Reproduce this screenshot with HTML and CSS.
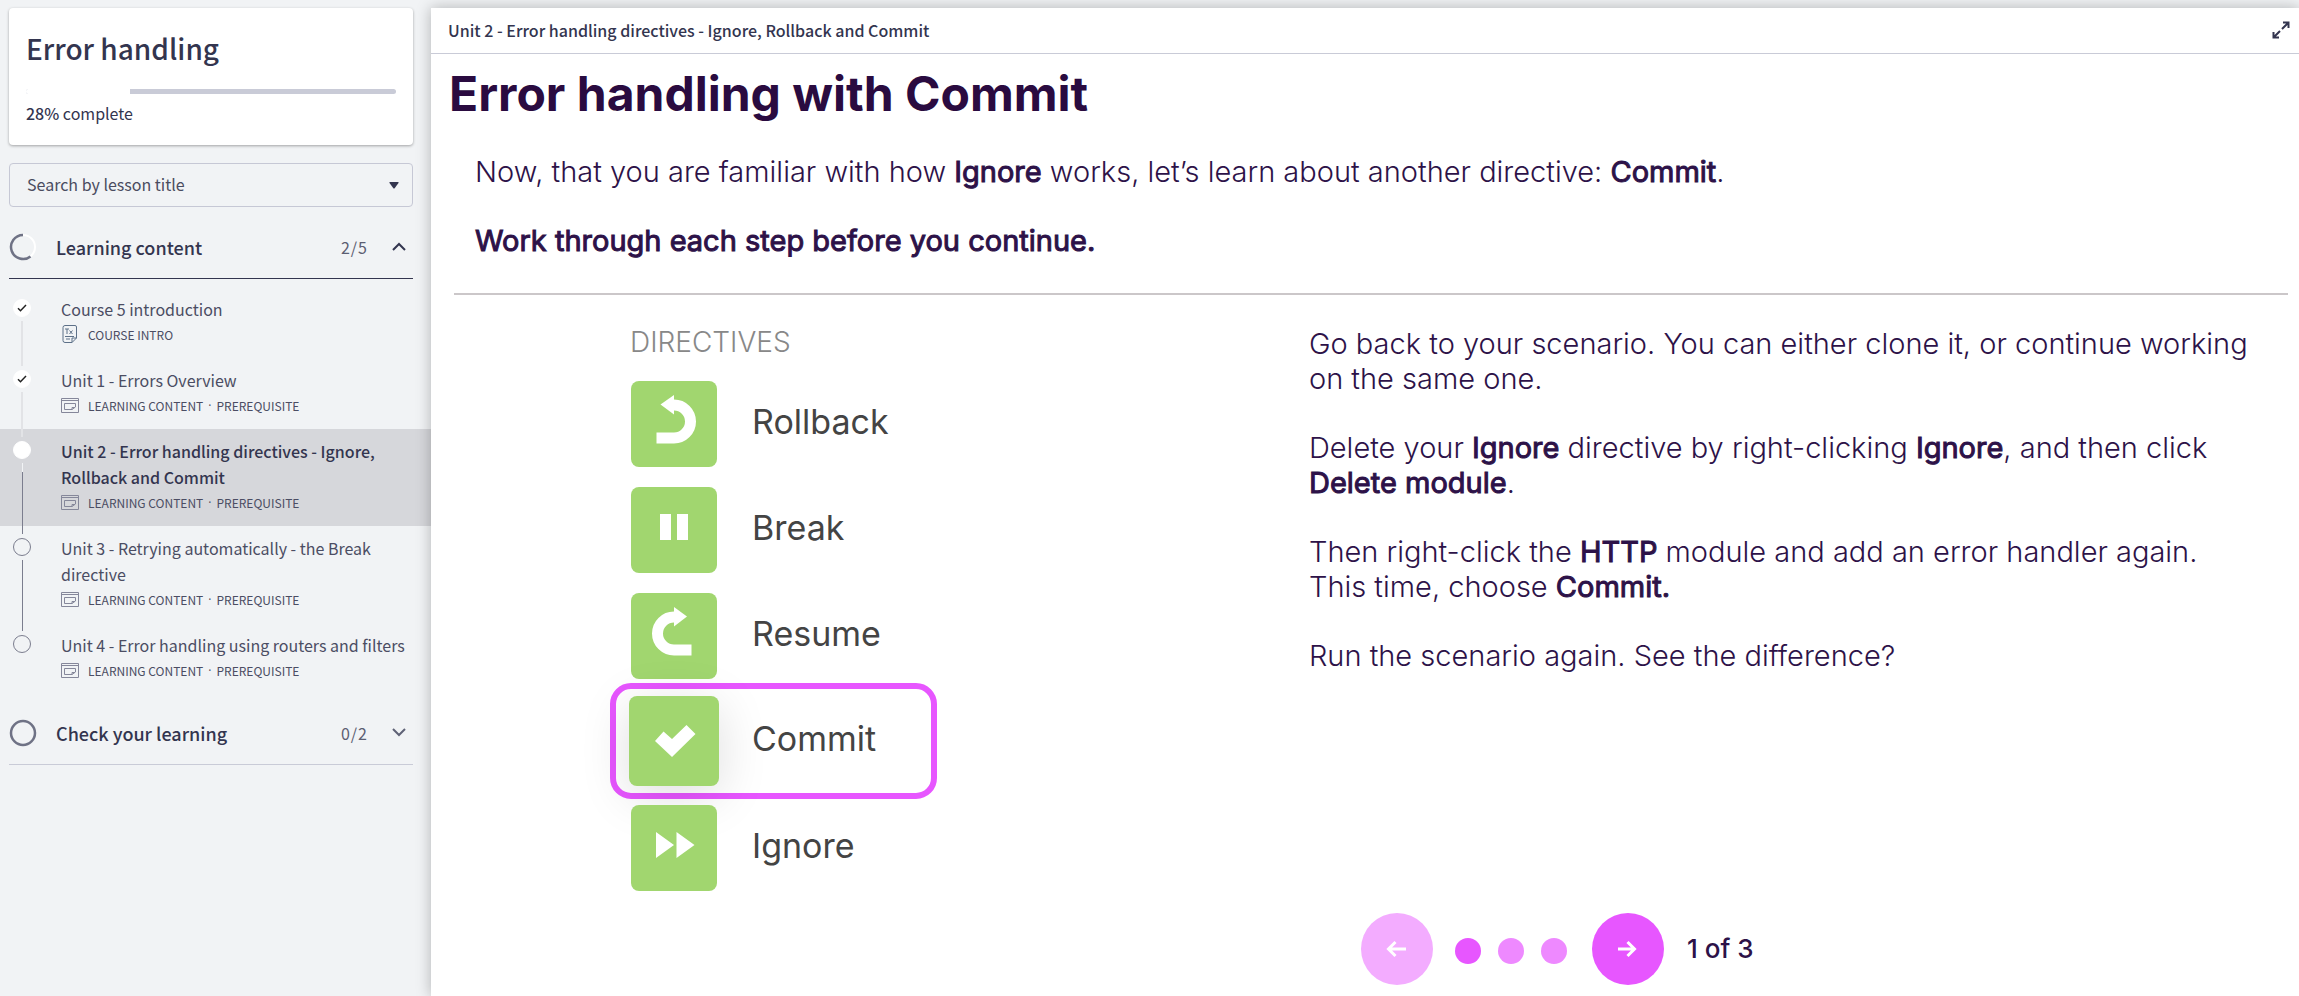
FILE: index.html
```html
<!DOCTYPE html>
<html lang="en">
<head>
<meta charset="utf-8">
<meta name="viewport" content="width=device-width, initial-scale=1">
<title>Error handling</title>
<link rel="stylesheet" href="styles.css">
</head>
<body>
<svg class="sprite" aria-hidden="true">
  <symbol id="lesson" viewBox="0 0 18 15">
    <path d="M.5.5h17v14H.5zM1 2.500h16" fill="none" stroke="currentColor"/>
    <path d="M11 11.500H3.500v-6h11v3.500l-3.500 2.500V9.500h3" fill="none" stroke="currentColor"/>
  </symbol>
</svg>
<div class="layout">
  <aside class="sidebar">
    <section class="course">
      <h1 class="course-title">Error handling</h1>
      <div class="progress" role="progressbar" aria-label="Course progress" aria-valuenow="28" aria-valuemin="0" aria-valuemax="100"><div class="progress-done" style="width:28%"></div></div>
      <p class="progress-text"><b>28%</b> complete</p>
    </section>
    <div class="search">
      <select class="search-select" aria-label="Search by lesson title"><option>Search by lesson title</option></select>
      <svg class="caret" width="10" height="7" viewBox="0 0 10 7"><path d="M1 0h8q1 0 .5 1L5.800 6q-.8 1-1.600 0L.5 1Q0 0 1 0z" fill="#33354f"/></svg>
    </div>
    <nav aria-label="Lessons">
      <button class="section section-open" type="button" aria-expanded="true">
        <svg class="ring" width="28" height="28" viewBox="0 0 28 28"><circle cx="14" cy="14" r="12" fill="none" stroke="#fff" stroke-width="2"/><path d="M14 2A12 12 0 1 0 21.500 23.400" fill="none" stroke="#6f7285" stroke-width="2.500"/></svg>
        <span class="section-name">Learning content</span>
        <span class="section-count">2/5</span>
        <svg class="chevron" width="14" height="9" viewBox="0 0 14 9"><path d="M1 8l6-6 6 6" fill="none" stroke="#33354f" stroke-width="2"/></svg>
      </button>
      <ol class="lessons">
        <li class="lesson">
          <div class="rail"><span class="dot dot-done"><svg width="10" height="8" viewBox="0 0 10 8"><path d="M1 4.200l2.500 2.500L9 1" fill="none" stroke="#222" stroke-width="1.500"/></svg></span><span class="line"></span></div>
          <a class="lesson-link" href="#intro"><span class="lesson-title">Course 5 introduction</span>
            <span class="meta"><svg class="meta-icon" width="18" height="18" viewBox="0 0 18 18"><path d="M4 .5h10q1.500 0 1.500 1.500v11l-4.500 4.500H4Q2 17.500 2 15.500V2.500Q2 .5 4 .5zM15.500 13H11v4.500M4 4h4M6 4v5M8.500 5.500l3 3.500M11.500 5.500l-3 3.500M4 11.500h9M5 14h4" fill="none" stroke="#5d7088"/></svg>COURSE INTRO</span></a>
        </li>
        <li class="lesson">
          <div class="rail"><span class="dot dot-done"><svg width="10" height="8" viewBox="0 0 10 8"><path d="M1 4.200l2.500 2.500L9 1" fill="none" stroke="#222" stroke-width="1.500"/></svg></span><span class="line"></span></div>
          <a class="lesson-link" href="#unit1"><span class="lesson-title">Unit 1 - Errors Overview</span>
            <span class="meta"><svg class="meta-icon" width="18" height="15"><use href="#lesson"/></svg>LEARNING CONTENT<span class="sep">·</span>PREREQUISITE</span></a>
        </li>
        <li class="lesson current">
          <div class="rail"><span class="dot dot-done"></span><span class="line line-current"></span></div>
          <a class="lesson-link" href="#unit2" aria-current="page"><span class="lesson-title">Unit 2 - Error handling directives - Ignore, Rollback and Commit</span>
            <span class="meta"><svg class="meta-icon" width="18" height="15"><use href="#lesson"/></svg>LEARNING CONTENT<span class="sep">·</span>PREREQUISITE</span></a>
        </li>
        <li class="lesson">
          <div class="rail"><span class="dot"></span><span class="line line-dark"></span></div>
          <a class="lesson-link" href="#unit3"><span class="lesson-title">Unit 3 - Retrying automatically - the Break directive</span>
            <span class="meta"><svg class="meta-icon" width="18" height="15"><use href="#lesson"/></svg>LEARNING CONTENT<span class="sep">·</span>PREREQUISITE</span></a>
        </li>
        <li class="lesson">
          <div class="rail"><span class="dot"></span></div>
          <a class="lesson-link" href="#unit4"><span class="lesson-title">Unit 4 - Error handling using routers and filters</span>
            <span class="meta"><svg class="meta-icon" width="18" height="15"><use href="#lesson"/></svg>LEARNING CONTENT<span class="sep">·</span>PREREQUISITE</span></a>
        </li>
      </ol>
      <button class="section" type="button" aria-expanded="false">
        <svg class="ring" width="28" height="28" viewBox="0 0 28 28"><circle cx="14" cy="14" r="12" fill="none" stroke="#6f7285" stroke-width="2.500"/></svg>
        <span class="section-name">Check your learning</span>
        <span class="section-count">0/2</span>
        <svg class="chevron" width="14" height="9" viewBox="0 0 14 9"><path d="M1 1l6 6 6-6" fill="none" stroke="#5f6276" stroke-width="2"/></svg>
      </button>
    </nav>
  </aside>

  <main class="viewer">
    <header class="topbar">
      <span class="topbar-title">Unit 2 - Error handling directives - Ignore, Rollback and Commit</span>
      <button class="expand" type="button" aria-label="Full screen"><svg width="18" height="18" viewBox="0 0 18 18"><path d="M11 1.500h5.500V7M16 2l-6 6M1.500 11v5.500H7M2 16l6-6" fill="none" stroke="#33354f" stroke-width="2"/></svg></button>
    </header>
    <h2 class="slide-title">Error handling with Commit</h2>
    <div class="intro">
      <p>Now, that you are familiar with how <b>Ignore</b> works, let’s learn about another directive: <b>Commit</b>.</p>
      <p><b>Work through each step before you continue.</b></p>
    </div>
    <hr class="divider">
    <div class="slide">
      <section class="directives">
        <h3 class="directives-title">DIRECTIVES</h3>
        <ul class="directive-list">
          <li class="directive"><span class="tile"><svg viewBox="0 0 86 86"><path d="M25.500 57H43a16.500 16.500 0 0 0 0-33" fill="none" stroke="#fff" stroke-width="11"/><path d="M43 14v19.500L29.500 23.500z" fill="#fff"/></svg></span><span class="label">Rollback</span></li>
          <li class="directive"><span class="tile"><svg viewBox="0 0 86 86"><path d="M29 27h11v26H29zM46 27h11v26H46z" fill="#fff"/></svg></span><span class="label">Break</span></li>
          <li class="directive"><span class="tile"><svg viewBox="0 0 86 86"><path d="M60.500 57H43a16.500 16.500 0 0 1 0-33" fill="none" stroke="#fff" stroke-width="11"/><path d="M43 14v19.500L56 23.500z" fill="#fff"/></svg></span><span class="label">Resume</span></li>
          <li class="directive selected"><span class="tile"><svg viewBox="0 0 90 90"><path d="M26 45l8.500-9.500 8.500 7.500L57.500 29l9 9L43 61z" fill="#fff"/></svg></span><span class="label">Commit</span></li>
          <li class="directive"><span class="tile"><svg viewBox="0 0 86 86"><path d="M25 27l18 13-18 13zM45.500 27l18 13-18 13z" fill="#fff"/></svg></span><span class="label">Ignore</span></li>
        </ul>
      </section>
      <section class="steps">
        <p>Go back to your scenario. You can either clone it, or continue working on the same one.</p>
        <p>Delete your <b>Ignore</b> directive by right-clicking <b>Ignore</b>, and then click <b>Delete module</b>.</p>
        <p>Then right-click the <b>HTTP</b> module and add an error handler again. This time, choose <b>Commit.</b></p>
        <p>Run the scenario again. See the difference?</p>
      </section>
      <div class="pager">
        <button class="round prev" type="button" aria-label="Previous"><svg width="22" height="18" viewBox="0 0 22 18"><path d="M20 9H2.500M9.500 2l-7 7 7 7" fill="none" stroke="#fff" stroke-width="3"/></svg></button>
        <div class="pages"><button class="page active" type="button" aria-label="Step 1"></button><button class="page" type="button" aria-label="Step 2"></button><button class="page" type="button" aria-label="Step 3"></button></div>
        <button class="round" type="button" aria-label="Next"><svg width="22" height="18" viewBox="0 0 22 18"><path d="M1 9h16.500M10.500 2l7 7-7 7" fill="none" stroke="#fff" stroke-width="3"/></svg></button>
        <span class="pager-text">1 of 3</span>
      </div>
    </div>
  </main>
</div>
</body>
</html>
```
FILE: styles.css
```css
* { box-sizing: border-box; }
body { margin: 0; background: #f1f3f5; color: #33354f; font-family: "Noto Sans CJK SC", sans-serif; font-size: 16px; }
button { font: inherit; color: inherit; border: 0; padding: 0; background: none; cursor: pointer; }
h1, h2, h3, p, ol, ul { margin: 0; padding: 0; }
ol, ul { list-style: none; }
.sprite { display: none; }
.layout { display: grid; grid-template-columns: 431px minmax(0, 1fr); min-height: 100vh; padding-top: 8px; overflow: hidden; }

.course { margin: 0 18px 18px 9px; padding: 18px 17px 18px 17px; background: #fff; border-radius: 4px; box-shadow: 0 1px 3px #0005; }
.course-title { font-size: 28px; font-weight: 500; line-height: 44px; }
.progress { margin-top: 19px; height: 5px; background: #c9cbd7; border-radius: 3px; overflow: hidden; }
.progress-done { height: 100%; background: #fff; }
.progress-text { margin-top: 6px; font-size: 16px; line-height: 27px; }
.progress-text b { font-weight: 500; }
.search { display: grid; align-items: center; margin: 0 18px 8px 9px; }
.search-select { grid-area: 1 / 1; width: 100%; height: 44px; padding: 0 17px 2px; font: inherit; color: #4a4c60; appearance: none; background: none; border: 1px solid #c6c8d5; border-radius: 4px; }
.caret { grid-area: 1 / 1; justify-self: end; margin-right: 14px; pointer-events: none; }
.section { display: flex; align-items: center; width: 404px; height: 64px; margin-left: 9px; text-align: left; border-bottom: 1px solid #c9cbd7; }
.section-open { border-color: #33354f; }
.section-name { flex: 1; margin-left: 19px; font-size: 18px; font-weight: 500; }
.section-count { color: #5c5e72; letter-spacing: 1px; }
.chevron { margin: 0 7px 0 24px; }
.lessons { padding: 8px 0 7px; }
.lesson { display: flex; padding-left: 13px; }
.current { background: #d6d7db; }
.rail { display: flex; flex-direction: column; align-items: center; width: 18px; padding-top: 12px; gap: 4px; }
.dot { display: grid; place-items: center; flex: none; width: 18px; height: 18px; border: 1px solid #7b7d8e; border-radius: 50%; }
.dot-done { background: #fff; border-color: #fff; }
.line { position: relative; z-index: 1; flex: 1; width: 2px; margin-bottom: -8px; background: #e2e3e6; }
.line-dark { width: 1px; background: #7b7d8e; }
.line-current { width: 1px; background: linear-gradient(#f1f3f5 9px, #7b7d8e 9px); }
.lesson-link { flex: 1; padding: 9px 18px 12px 30px; color: #4b4d63; text-decoration: none; }
.lesson-title { display: block; line-height: 26px; }
.current .lesson-title { color: #33354f; font-weight: 500; }
.meta { display: flex; align-items: center; height: 24px; font-size: 12px; }
.meta-icon { width: 18px; margin-right: 9px; color: #85879a; }
.sep { margin: 0 5px; font-family: "Open Sans", sans-serif; }

.viewer { background: #fff; box-shadow: 0 0 14px #0004; color: #2d1248; font-family: Inter, sans-serif; }
.topbar { display: flex; align-items: center; justify-content: space-between; height: 46px; padding: 0 9px 2px 17px; border-bottom: 1px solid #c9cbd7; color: #33354f; font-family: "Noto Sans CJK SC", sans-serif; font-weight: 500; font-size: 16px; }
.expand { display: flex; }
.slide-title { padding: 10px 18px 0; color: #2a0b40; font-size: 48px; font-weight: 700; line-height: 60px; }
.intro { display: grid; gap: 34px; padding: 30px 44px 0; font-size: 29px; font-weight: 300; line-height: 35px; }
.intro b, .steps b { font-weight: 400; -webkit-text-stroke: 1px; }
.divider { height: 2px; margin: 35px 11px 0 23px; border: 0; background: #cbc7c9; }
.slide { display: grid; grid-template-columns: 47fr 53fr; grid-template-rows: auto auto; }
.directives { grid-row: 1; padding: 29px 0 0 179px; color: #444; }
.directives-title { padding-left: 20px; color: #888; font-size: 28px; font-weight: 300; line-height: 36px; }
.directive-list { width: 327px; margin-top: 11px; }
.directive { display: flex; align-items: center; gap: 35px; height: 106px; padding-left: 21px; font-size: 34px; }
.label { padding-bottom: 6px; }
.tile { flex: none; width: 86px; height: 86px; border-radius: 8px; background: #a1d66f; }
.tile svg { display: block; }
.selected { gap: 33px; height: 116px; margin: -6px 0 -4px; padding-left: 13px; border: 6px solid #e756ff; border-radius: 21px; }
.selected .tile { width: 90px; height: 90px; box-shadow: 0 10px 50px #0002; }
.steps { display: grid; align-content: start; gap: 34px; padding: 31px 50px 0 0; font-size: 29px; font-weight: 300; line-height: 35px; }
.pager { grid-area: 2 / 2; display: flex; align-items: center; margin-top: 12px; padding-left: 52px; }
.round { display: grid; place-items: center; width: 72px; height: 72px; border-radius: 50%; background: #e756ff; }
.prev { background: #f3acff; }
.pages { display: flex; gap: 17px; padding-top: 4px; margin: 0 25px 0 22px; }
.page { width: 26px; height: 26px; border-radius: 50%; background: #ee89ff; }
.active { background: #e756ff; }
.pager-text { margin-left: 23px; padding-bottom: 2px; font-size: 26px; font-weight: 500; }
```
